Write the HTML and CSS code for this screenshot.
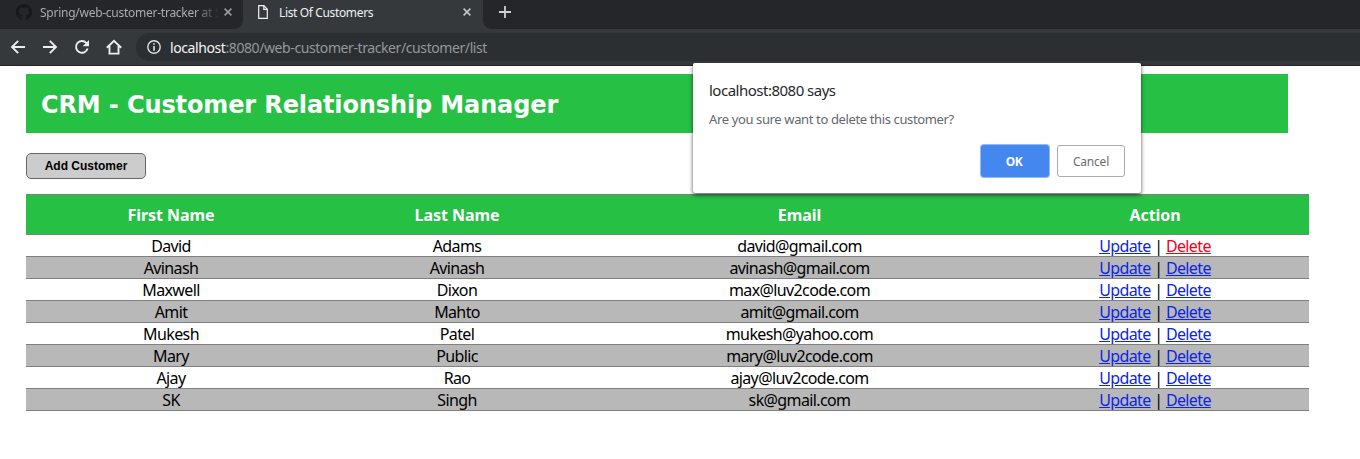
FILE: index.html
```html
<!DOCTYPE html>
<html lang="en">
<head>
<meta charset="utf-8">
<title>List Of Customers</title>
<link rel="stylesheet" href="styles.css">
</head>
<body>
<div class="tabs">
  <div class="tab idle">
    <svg class="hub" width="16" height="16" viewBox="0 0 16 16"><path fill="#17181b" d="M8 0C3.58 0 0 3.58 0 8c0 3.54 2.29 6.53 5.47 7.59.4.07.55-.17.55-.38 0-.19-.01-.82-.01-1.49-2.01.37-2.53-.49-2.69-.94-.09-.23-.48-.94-.82-1.13-.28-.15-.68-.52-.01-.53.63-.01 1.08.58 1.23.82.72 1.21 1.87.87 2.33.66.07-.52.28-.87.51-1.07-1.78-.2-3.64-.89-3.64-3.95 0-.87.31-1.59.82-2.15-.08-.2-.36-1.02.08-2.12 0 0 .67-.21 2.2.82.64-.18 1.32-.27 2-.27s1.36.09 2 .27c1.53-1.04 2.2-.82 2.2-.82.44 1.1.16 1.92.08 2.12.51.56.82 1.27.82 2.15 0 3.07-1.87 3.75-3.65 3.95.29.25.54.73.54 1.48 0 1.07-.01 1.93-.01 2.2 0 .21.15.46.55.38A8.01 8.01 0 0 0 16 8c0-4.42-3.58-8-8-8z"/></svg>
    <span class="tab-name one">Spring/web-customer-tracker at S</span>
    <svg class="close" width="8" height="8" viewBox="0 0 8 8"><path d="M.6.6l6.8 6.8M7.4.6L.6 7.4" stroke="#9b9da0" stroke-width="1.5"/></svg>
  </div>
  <div class="tab active">
    <svg class="page-icon" width="10" height="14" viewBox="0 0 10 14"><path d="M.7.7h5.2l3.4 3.5v9.1H.7zM5.8.7v3.6h3.5" fill="none" stroke="#f2f2f2" stroke-width="1.2"/></svg>
    <span class="tab-name two">List Of Customers</span>
    <svg class="close" width="8" height="8" viewBox="0 0 8 8"><path d="M.6.6l6.8 6.8M7.4.6L.6 7.4" stroke="#c4c6c8" stroke-width="1.5"/></svg>
  </div>
  <svg class="plus" width="12" height="12" viewBox="0 0 12 12"><path d="M6 0v12M0 6h12" stroke="#d0d1d3" stroke-width="1.8"/></svg>
</div>
<div class="toolbar">
  <div class="nav">
    <svg width="16" height="16" viewBox="0 0 16 16"><path d="M15 8H2.5M8.2 1.8L2 8l6.2 6.2"/></svg>
    <svg width="16" height="16" viewBox="0 0 16 16"><path d="M1 8h12.500M7.800 1.800L14 8l-6.200 6.200"/></svg>
    <svg width="16" height="16" viewBox="0 0 16 16"><path d="M13.600 9.500A5.900 5.900 0 1 1 12.300 3.900L13 4.600"/><path d="M15 1v6.300H8.700z" class="solid"/></svg>
    <svg width="16" height="16" viewBox="0 0 16 16"><path d="M.8 8.700L8 1.700l7.200 7M3.500 7v7.600h9V7"/></svg>
  </div>
  <div class="address">
    <svg width="14" height="14" viewBox="0 0 14 14"><circle cx="7" cy="7" r="6.200" fill="none" stroke="#e0e1e3" stroke-width="1.400"/><path d="M7 3.300v1.500M7 6v4.700" stroke="#e0e1e3" stroke-width="1.600"/></svg>
    <span class="url"><b>localhost</b>:8080/web-customer-tracker/customer/list</span>
  </div>
</div>
<main>
  <header><h2><span>CRM - Customer Relationship Manager</span></h2></header>
  <button class="add">Add Customer</button>
  <table>
    <colgroup><col class="c1"><col class="c2"><col class="c3"><col class="c4"></colgroup>
    <tr><th>First Name</th><th>Last Name</th><th>Email</th><th>Action</th></tr>
    <tr><td>David</td><td>Adams</td><td>david@gmail.com</td><td><a>Update</a> | <a class="pressed">Delete</a></td></tr>
    <tr><td>Avinash</td><td>Avinash</td><td>avinash@gmail.com</td><td><a>Update</a> | <a>Delete</a></td></tr>
    <tr><td>Maxwell</td><td>Dixon</td><td>max@luv2code.com</td><td><a>Update</a> | <a>Delete</a></td></tr>
    <tr><td>Amit</td><td>Mahto</td><td>amit@gmail.com</td><td><a>Update</a> | <a>Delete</a></td></tr>
    <tr><td>Mukesh</td><td>Patel</td><td>mukesh@yahoo.com</td><td><a>Update</a> | <a>Delete</a></td></tr>
    <tr><td>Mary</td><td>Public</td><td>mary@luv2code.com</td><td><a>Update</a> | <a>Delete</a></td></tr>
    <tr><td>Ajay</td><td>Rao</td><td>ajay@luv2code.com</td><td><a>Update</a> | <a>Delete</a></td></tr>
    <tr><td>SK</td><td>Singh</td><td>sk@gmail.com</td><td><a>Update</a> | <a>Delete</a></td></tr>
  </table>
</main>
<div class="dialog">
  <div class="origin"><span>localhost:8080 says</span></div>
  <div class="message"><span>Are you sure want to delete this customer?</span></div>
  <div class="buttons"><button class="ok">OK</button><button class="cancel">Cancel</button></div>
</div>
</body>
</html>
```
FILE: styles.css
```css
* { box-sizing: border-box; }
body { margin: 0; height: 459px; overflow: hidden; background: #fff; font-family: "Noto Sans", sans-serif; }
svg { display: block; flex: none; }
.tabs { height: 29px; background: #25262a; display: flex; align-items: flex-start; }
.tab { height: 29px; display: flex; align-items: center; padding-bottom: 5px; font-size: 12px; white-space: nowrap; }
.idle { width: 243px; padding-left: 16px; color: #a9abae; }
.active { width: 240px; padding-left: 15px; background: #35393c; color: #eef0f1; position: relative; }
.active::before, .active::after { content: ""; position: absolute; bottom: 0; width: 8px; height: 8px; }
.active::before { left: -8px; background: radial-gradient(circle at 0 0, transparent 7.5px, #35393c 8px); }
.active::after { right: -8px; background: radial-gradient(circle at 100% 0, transparent 7.5px, #35393c 8px); }
.tab-name { flex: none; }
.one { margin-left: 8px; width: 181px; letter-spacing: -0.26px; -webkit-mask-image: linear-gradient(90deg, #000 155px, transparent 179px); }
.two { margin-left: 11px; width: 177px; letter-spacing: -0.36px; }
.idle .close { margin-left: 3px; }
.active .close { margin-left: 7px; }
.plus { margin: 6px 0 0 16px; }
.toolbar { height: 37px; background: #35393c; border-bottom: 1px solid #292126; display: flex; align-items: flex-start; padding: 4px 0 0 10px; }
.nav { display: flex; gap: 16px; padding-top: 6px; width: 126px; }
.nav path { fill: none; stroke: #eceded; stroke-width: 1.9; }
.nav .solid { fill: #eceded; stroke: none; }
.address { flex: 1; height: 28px; background: #2b2f31; border-radius: 14px 0 0 14px; display: flex; align-items: center; padding-left: 11px; }
.url { margin-left: 9px; font-size: 14px; color: #94989b; white-space: nowrap; letter-spacing: -0.41px; }
.url b { font-weight: 400; color: #f3f4f4; }
main { padding: 8px 0 0 26px; }
header { width: 1262px; height: 59px; background: #26c045; padding: 2px 0 0 15px; }
h2 { margin: 0; font: bold 24px/58px "DejaVu Sans", sans-serif; letter-spacing: -0.12px; color: #fff; white-space: nowrap; }
.add { display: block; width: 120px; height: 26px; margin: 20px 0 15px; padding: 0; border: 1px solid #666; border-radius: 5px; background: #ccc; color: #000; font: bold 12px "Liberation Sans", sans-serif; }
table { width: 1283px; table-layout: fixed; border-collapse: collapse; font: 16px/19px "Noto Sans", sans-serif; text-align: center; color: #000; }
.c1 { width: 290px; } .c2 { width: 282px; } .c3 { width: 403px; } .c4 { width: 308px; }
tr { height: 22px; border-top: 1px solid gray; border-bottom: 1px solid gray; }
tr:first-child { height: 40px; background: #26c045; }
tr:nth-child(odd):not(:first-child) { background: #b8b8b8; }
th, td { padding: 2px 0 0; }
td { letter-spacing: -0.62px; }
th { color: #fff; font-weight: 700; letter-spacing: -0.05px; }
a { color: #0b24e8; text-decoration: underline; }
a.pressed { color: #f00018; }
.dialog { position: absolute; left: 693px; top: 63px; width: 448px; height: 130px; padding: 16px; background: #fff; border-radius: 2px; box-shadow: 0 0 1px #555, 0 2px 4px rgba(0,0,0,.6); }
.origin { font-size: 15px; line-height: 22px; color: #25282b; letter-spacing: -0.5px; }
.message { margin-top: 8px; font-size: 13px; line-height: 20px; color: #65686c; letter-spacing: -0.37px; }
.buttons { display: flex; justify-content: flex-end; gap: 8px; margin-top: 16px; }
.buttons button { height: 32px; border-radius: 3px; padding: 0; font: 12px "Noto Sans", sans-serif; letter-spacing: -0.2px; }
.ok { width: 68px; background: #4387ef; color: #fff; border: 0; box-shadow: 0 0 0 1px #94bbf7; }
.buttons .ok { font-weight: 700; padding: 0 2px 0 0; letter-spacing: -0.5px; }
.cancel { width: 68px; background: #fff; color: #6b6e72; border: 1px solid #a9abae; }
```
